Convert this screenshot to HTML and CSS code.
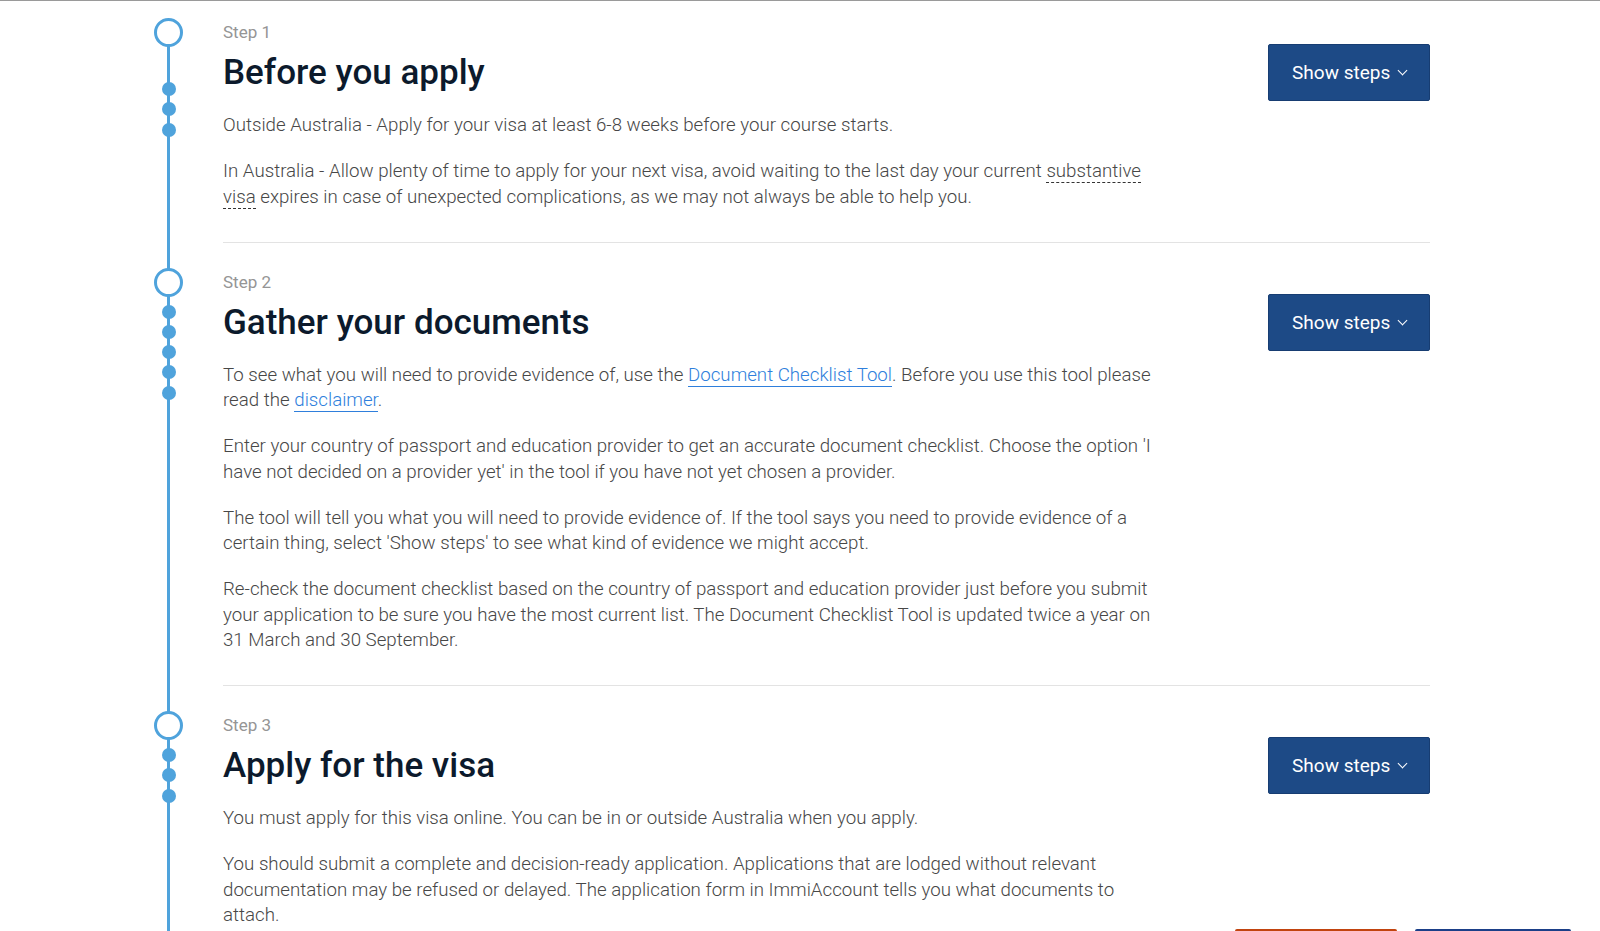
FILE: index.html
```html
<!DOCTYPE html>
<html>
<head>
<link rel="stylesheet" href="styles.css">
</head>
<body>
<div class="steps">

  <section class="step first">
    <div class="rail">
      <span class="ring"></span>
      <span class="dot"></span>
      <span class="dot"></span>
      <span class="dot"></span>
    </div>
    <div class="content">
      <div class="head">
        <div>
          <p class="label">Step 1</p>
          <h2>Before you apply</h2>
        </div>
        <button class="toggle">Show steps <span class="chev"></span></button>
      </div>
      <div class="text">
        <p>Outside Australia - Apply for your visa at least 6-8 weeks before your course starts.</p>
        <p>In Australia - Allow plenty of time to apply for your next visa, avoid waiting to the last day your current <abbr>substantive visa</abbr> expires in case of unexpected complications, as we may not always be able to help you.</p>
      </div>
    </div>
  </section>

  <section class="step">
    <div class="rail">
      <span class="ring"></span>
      <span class="dot"></span>
      <span class="dot"></span>
      <span class="dot"></span>
      <span class="dot"></span>
      <span class="dot"></span>
    </div>
    <div class="content">
      <div class="head">
        <div>
          <p class="label">Step 2</p>
          <h2>Gather your documents</h2>
        </div>
        <button class="toggle">Show steps <span class="chev"></span></button>
      </div>
      <div class="text">
        <p>To see what you will need to provide evidence of, use the <a href="#">Document Checklist Tool</a>. Before you use this tool please read the <a href="#">disclaimer</a>.</p>
        <p>Enter your country of passport and education provider to get an accurate document checklist. Choose the option 'I have not decided on a provider yet' in the tool if you have not yet chosen a provider.</p>
        <p>The tool will tell you what you will need to provide evidence of. If the tool says you need to provide evidence of a certain thing, select 'Show steps' to see what kind of evidence we might accept.</p>
        <p>Re-check the document checklist based on the country of passport and education provider just before you submit your application to be sure you have the most current list. The Document Checklist Tool is updated twice a year on 31 March and 30 September.</p>
      </div>
    </div>
  </section>

  <section class="step last">
    <div class="rail">
      <span class="ring"></span>
      <span class="dot"></span>
      <span class="dot"></span>
      <span class="dot"></span>
    </div>
    <div class="content">
      <div class="head">
        <div>
          <p class="label">Step 3</p>
          <h2>Apply for the visa</h2>
        </div>
        <button class="toggle">Show steps <span class="chev"></span></button>
      </div>
      <div class="text">
        <p>You must apply for this visa online. You can be in or outside Australia when you apply.</p>
        <p>You should submit a complete and decision-ready application. Applications that are lodged without relevant documentation may be refused or delayed. The application form in ImmiAccount tells you what documents to attach.</p>
      </div>
    </div>
  </section>

</div>

<div class="floaters">
  <span class="tab orange"></span>
  <span class="tab blue"></span>
</div>
</body>
</html>
```

FILE: styles.css
```css
html, body {
    margin: 0;
    padding: 0;
    background: #fff;
}
body {
    border-top: 1px solid #9a9a9a;
    font-family: Roboto, "Liberation Sans", sans-serif;
    color: #333;
}

.steps {
    margin-left: 140px;
    width: 1290px;
}

.step {
    display: flex;
    padding-top: 26px;
}
.step.first {
    padding-top: 18px;
}

/* timeline column */
.rail {
    width: 57px;
    flex: none;
    display: flex;
    flex-direction: column;
    align-items: center;
    background: linear-gradient(#4fa3dc, #4fa3dc) center top / 3px 100% no-repeat;
    margin-top: -26px;
    padding-top: 25px;
}
.step.first .rail {
    margin-top: -18px;
    padding-top: 17px;
    background-position: center 30px;
}
.ring {
    width: 29px;
    height: 29px;
    box-sizing: border-box;
    border: 3px solid #4fa3dc;
    border-radius: 50%;
    background: #fff;
}
.dot {
    width: 14px;
    height: 14px;
    border-radius: 50%;
    background: #4fa3dc;
    margin-top: 6.3px;
}
.ring + .dot {
    margin-top: 8px;
}
.step.first .ring + .dot {
    margin-top: 35px;
}

.content {
    flex: 1;
    margin-left: 26px;
    padding-bottom: 11px;
    border-bottom: 1px solid #e3e3e3;
}
.step.last .content {
    border-bottom: none;
}

.head {
    display: flex;
    justify-content: space-between;
    align-items: flex-start;
}
.label {
    margin: 1px 0 0 0;
    font-size: 17px;
    line-height: 24px;
    color: #959595;
}
h2 {
    margin: 9px 0 20px 0;
    font-size: 35px;
    line-height: 40px;
    font-weight: 500;
    color: #0c1a2c;
}
.toggle {
    margin-top: 25px;
    width: 162px;
    height: 57px;
    background: #1d4a86;
    border: 1px solid #173d72;
    border-radius: 2px;
    color: #fff;
    font-family: Roboto, "Liberation Sans", sans-serif;
    font-size: 19px;
    padding: 0;
}
.chev {
    display: inline-block;
    width: 6px;
    height: 6px;
    border-right: 1.5px solid #fff;
    border-bottom: 1.5px solid #fff;
    transform: rotate(45deg);
    margin: 0 0 5px 4px;
}

.text {
    max-width: 935px;
}
.text p {
    margin: 0 0 20.5px 0;
    font-family: "Roboto Light", Roboto, sans-serif;
    font-size: 18.7px;
    line-height: 25.5px;
    font-weight: 300;
    color: #474747;
}
.text a {
    color: #2f7fdc;
    text-decoration: none;
    border-bottom: 1px solid #2f7fdc;
}
abbr {
    text-decoration: none;
    border-bottom: 1px dashed #333;
}

.floaters {
    position: fixed;
    bottom: 0;
    left: 1235px;
    display: flex;
    gap: 18px;
}
.tab {
    display: block;
    height: 2px;
    border-radius: 5px 5px 0 0;
}
.orange {
    width: 162px;
    background: #c2440f;
}
.blue {
    width: 156px;
    background: #1b3f88;
}
```
